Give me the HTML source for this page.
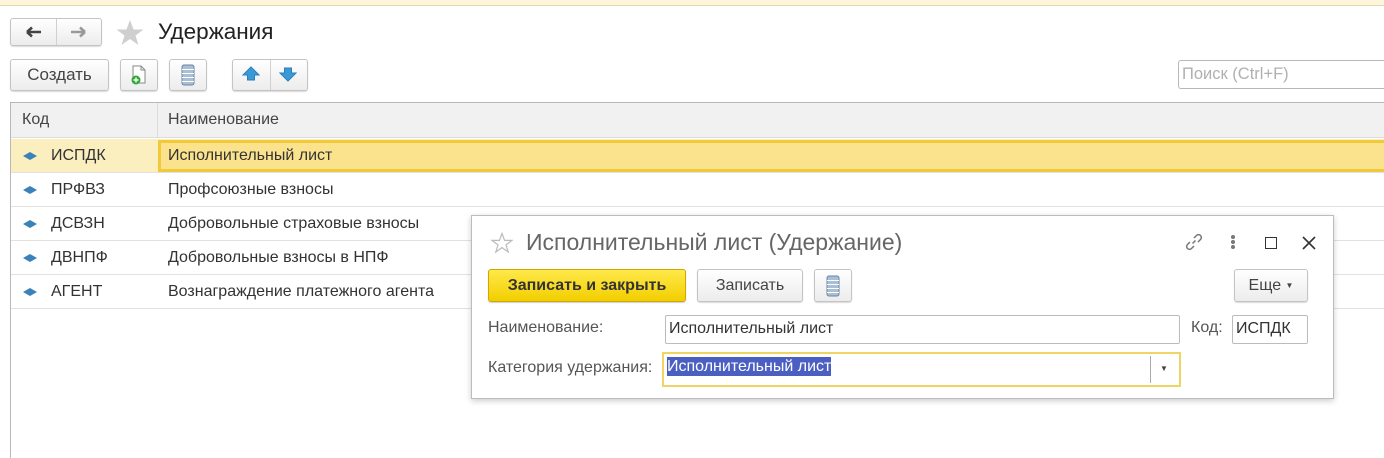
<!DOCTYPE html>
<html><head><meta charset="utf-8"><style>
*{box-sizing:border-box;margin:0;padding:0}
body{width:1384px;height:458px;background:#fff;font-family:"Liberation Sans",Arial,sans-serif;font-size:16px;color:#333;position:relative;overflow:hidden}
.a{position:absolute}
.btn{position:absolute;background:linear-gradient(#fff,#ececec);border:1px solid #c4c4c4;border-radius:3px;box-shadow:0 1px 1px rgba(0,0,0,.15);text-align:center;color:#444}
.row{position:absolute;left:11px;right:0;height:34px;border-bottom:1px solid #e2e2e2}
.dia{position:absolute;left:12px;top:13px;width:14px;height:8px}
</style></head><body>
<div class="a" style="left:0;top:0;width:1384px;height:6px;background:#fdf6dc;border-bottom:1px solid #e8d9a8"></div>

<div class="btn" style="left:10px;top:18px;width:92px;height:28px"></div>
<div class="a" style="left:56px;top:19px;width:1px;height:26px;background:#d0d0d0"></div>
<svg class="a" style="left:24px;top:24px" width="20" height="16"><path d="M3 8H17M3 8L8 3.5M3 8L8 12.5" stroke="#444" stroke-width="2.6" fill="none"/></svg>
<svg class="a" style="left:68px;top:24px" width="20" height="16"><path d="M3 8H17M17 8L12 3.5M17 8L12 12.5" stroke="#999" stroke-width="2.6" fill="none"/></svg>
<svg class="a" style="left:115px;top:18px" width="30" height="30"><path d="M15 2L18.5 11.5H28.5L20.5 17.5L23.5 27L15 21L6.5 27L9.5 17.5L1.5 11.5H11.5Z" fill="#cfcfcf"/></svg>
<div class="a" style="left:158px;top:19px;font-size:22.5px;color:#222">Удержания</div>

<div class="btn" style="left:10px;top:59px;width:99px;height:32px;line-height:30px;font-size:17px">Создать</div>
<div class="btn" style="left:120px;top:59px;width:38px;height:32px"></div>
<svg class="a" style="left:128px;top:64px" width="22" height="22"><path d="M5 2H13L17 6V19H5Z" fill="#fff" stroke="#888"/><path d="M13 2V6H17" fill="none" stroke="#888"/><circle cx="8" cy="16" r="4.5" fill="#2fa83a"/><path d="M8 13.5V18.5M5.5 16H10.5" stroke="#fff" stroke-width="1.5"/></svg>
<div class="btn" style="left:169px;top:59px;width:38px;height:32px"></div>
<svg class="a" style="left:180px;top:64px" width="16" height="22"><rect x="2" y="1" width="12" height="20" rx="2" fill="#a9bfd6" stroke="#6a86a6"/><path d="M2 5.5H14M2 9.5H14M2 13.5H14M2 17.5H14" stroke="#fff"/></svg>
<div class="btn" style="left:232px;top:59px;width:76px;height:32px"></div>
<div class="a" style="left:270px;top:60px;width:1px;height:30px;background:#d0d0d0"></div>
<svg class="a" style="left:242px;top:66px" width="18" height="16"><path d="M9 1L17 9H12.5V14H5.5V9H1Z" fill="#3a9ad9" stroke="#2d7fb8"/></svg>
<svg class="a" style="left:279px;top:66px" width="18" height="16"><path d="M9 15L17 7H12.5V2H5.5V7H1Z" fill="#3a9ad9" stroke="#2d7fb8"/></svg>

<div class="a" style="left:1178px;top:60px;width:206px;height:29px;border:1px solid #b8b8b8;border-right:none;border-radius:3px 0 0 3px;color:#b0b0b0;font-size:16.5px;padding:4px 3px">Поиск (Ctrl+F)</div>

<div class="a" style="left:10px;top:102px;width:1374px;height:356px;border-left:1px solid #b8b8b8;border-top:1px solid #b8b8b8"></div>
<div class="a" style="left:11px;top:103px;width:1373px;height:35px;background:#f1f1f1;border-bottom:1px solid #ddd"></div>
<div class="a" style="left:157px;top:103px;width:1px;height:35px;background:#ddd"></div>
<div class="a" style="left:22px;top:111px;color:#444">Код</div>
<div class="a" style="left:168px;top:111px;color:#444">Наименование</div>

<div class="row" style="top:139px;background:#fbefbf"><div class="a" style="left:147px;top:1px;right:0;height:32px;background:#fbe38e;border:3px solid #f2c93a;border-right:none"></div></div>
<div class="row" style="top:173px"></div>
<div class="row" style="top:207px"></div>
<div class="row" style="top:241px"></div>
<div class="row" style="top:275px"></div>
<div class="a" style="left:11px;top:139px;width:1373px">
 <div class="a" style="top:0;left:0;width:500px;height:34px"><svg class="dia" viewBox="0 0 14 8"><path d="M0 4L7 0L14 4L7 8Z" fill="#3b82b8"/></svg><span class="a" style="left:40px;top:8px">ИСПДК</span><span class="a" style="left:157px;top:8px;white-space:nowrap">Исполнительный лист</span></div>
 <div class="a" style="top:34px;left:0;width:500px;height:34px"><svg class="dia" viewBox="0 0 14 8"><path d="M0 4L7 0L14 4L7 8Z" fill="#3b82b8"/></svg><span class="a" style="left:40px;top:8px">ПРФВЗ</span><span class="a" style="left:157px;top:8px;white-space:nowrap">Профсоюзные взносы</span></div>
 <div class="a" style="top:68px;left:0;width:500px;height:34px"><svg class="dia" viewBox="0 0 14 8"><path d="M0 4L7 0L14 4L7 8Z" fill="#3b82b8"/></svg><span class="a" style="left:40px;top:8px">ДСВЗН</span><span class="a" style="left:157px;top:8px;white-space:nowrap">Добровольные страховые взносы</span></div>
 <div class="a" style="top:102px;left:0;width:500px;height:34px"><svg class="dia" viewBox="0 0 14 8"><path d="M0 4L7 0L14 4L7 8Z" fill="#3b82b8"/></svg><span class="a" style="left:40px;top:8px">ДВНПФ</span><span class="a" style="left:157px;top:8px;white-space:nowrap">Добровольные взносы в НПФ</span></div>
 <div class="a" style="top:136px;left:0;width:500px;height:34px"><svg class="dia" viewBox="0 0 14 8"><path d="M0 4L7 0L14 4L7 8Z" fill="#3b82b8"/></svg><span class="a" style="left:40px;top:8px">АГЕНТ</span><span class="a" style="left:157px;top:8px;white-space:nowrap">Вознаграждение платежного агента</span></div>
</div>

<!-- dialog -->
<div class="a" style="left:471px;top:215px;width:863px;height:184px;background:#fff;border:1px solid #bcbcbc;box-shadow:0 2px 6px rgba(0,0,0,.2)">
 <svg class="a" style="left:19px;top:16px" width="22" height="22"><path d="M11 1.5L13.6 8.4H21L15 12.9L17.2 20L11 15.6L4.8 20L7 12.9L1 8.4H8.4Z" fill="none" stroke="#bbb" stroke-width="1.2"/></svg>
 <div class="a" style="left:54px;top:13px;font-size:23px;color:#666;white-space:nowrap">Исполнительный лист (Удержание)</div>
 <svg class="a" style="left:712px;top:16px" width="20" height="20"><path d="M8.5 11.5L11.5 8.5M6 10L3.5 12.5a2.8 2.8 0 0 0 4 4L10 14M14 10L16.5 7.5a2.8 2.8 0 0 0-4-4L10 6" fill="none" stroke="#777" stroke-width="1.5"/></svg>
 <div class="a" style="left:759px;top:19px;width:4px;height:4px;border-radius:2px;background:#777;box-shadow:0 5px 0 #777,0 10px 0 #777"></div>
 <div class="a" style="left:793px;top:21px;width:12px;height:12px;border:1.5px solid #333"></div>
 <svg class="a" style="left:829px;top:19px" width="16" height="16"><path d="M2 2L14 14M14 2L2 14" stroke="#333" stroke-width="1.6"/></svg>

 <div class="a" style="left:16px;top:53px;width:198px;height:33px;background:linear-gradient(#ffe94a,#f2ce00);border:1px solid #d1a800;border-radius:3px;box-shadow:0 1px 1px rgba(0,0,0,.2);font-weight:bold;font-size:16px;color:#333;text-align:center;line-height:31px;white-space:nowrap">Записать и закрыть</div>
 <div class="btn" style="left:225px;top:53px;width:106px;height:33px;line-height:31px;font-size:16px">Записать</div>
 <div class="btn" style="left:342px;top:53px;width:38px;height:33px"></div>
 <svg class="a" style="left:353px;top:59px" width="16" height="22"><rect x="2" y="1" width="12" height="20" rx="2" fill="#a9bfd6" stroke="#6a86a6"/><path d="M2 5.5H14M2 9.5H14M2 13.5H14M2 17.5H14" stroke="#fff"/></svg>
 <div class="btn" style="left:762px;top:53px;width:74px;height:33px;line-height:31px;font-size:16px">Еще <span style="font-size:8px;vertical-align:2px">▼</span></div>

 <div class="a" style="left:16px;top:103px;color:#555">Наименование:</div>
 <div class="a" style="left:193px;top:99px;width:515px;height:29px;border:1px solid #bcbcbc;border-radius:2px;padding:4px 3px;color:#333">Исполнительный лист</div>
 <div class="a" style="left:719px;top:103px;color:#555">Код:</div>
 <div class="a" style="left:760px;top:99px;width:76px;height:29px;border:1px solid #bcbcbc;border-radius:2px;padding:4px 3px;color:#333">ИСПДК</div>

 <div class="a" style="left:16px;top:143px;color:#555">Категория удержания:</div>
 <div class="a" style="left:190px;top:136px;width:519px;height:35px;border:2px solid #f0d564;padding:4px 3px">
  <span style="background:#4a5fc1;color:#fff;padding:1px 0">Исполнительный лист</span>
  <div class="a" style="left:486px;top:2px;width:1px;height:27px;background:#aaa"></div>
  <div class="a" style="left:496px;top:10px;font-size:8px;color:#444">▼</div>
 </div>
</div>
</body></html>
